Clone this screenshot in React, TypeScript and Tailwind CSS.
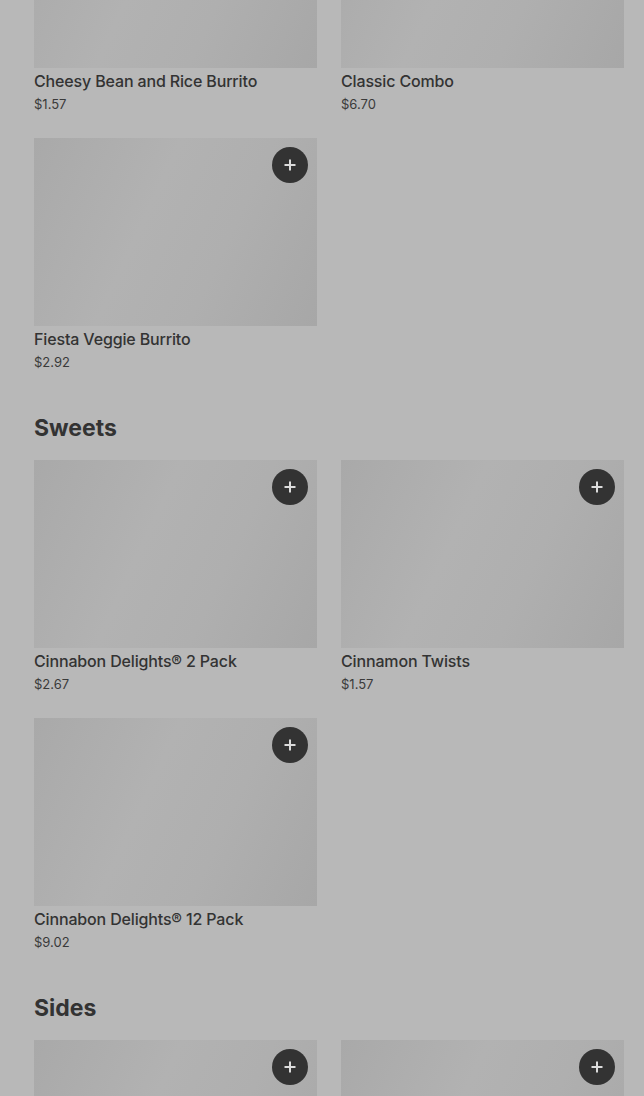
import React from "react";

type Item = { name?: string; price?: string };

const font = { fontFamily: "Inter, 'Liberation Sans', sans-serif" };

function PlusButton() {
  return (
    <button className="absolute top-[9px] right-[9px] w-9 h-9 rounded-full bg-[#333333] flex items-center justify-center">
      <svg width="14" height="14" viewBox="0 0 14 14">
        <path d="M7 1.5v11M1.5 7h11" stroke="#dcdcdc" strokeWidth="2" />
      </svg>
    </button>
  );
}

function Card({ item }: { item: Item }) {
  return (
    <div className="flex flex-col">
      <div className="relative h-[188px] bg-[linear-gradient(115deg,#a9a9a9_0%,#b2b2b2_40%,#afafaf_65%,#a7a7a7_100%)]">
        <PlusButton />
      </div>
      {item.name && (
        <div className="mt-[3px] text-[16px] leading-[20px] font-medium tracking-[-0.15px] text-[#333333]">{item.name}</div>
      )}
      {item.price && <div className="mt-[4px] text-[13px] leading-[18px] text-[#3a3a3a]">{item.price}</div>}
    </div>
  );
}

function Grid({ items }: { items: Item[] }) {
  return (
    <div className="grid grid-cols-2 gap-x-6 gap-y-[25px]">
      {items.map((it, i) => (
        <Card key={i} item={it} />
      ))}
    </div>
  );
}

function Section({ title, items }: { title: string; items: Item[] }) {
  return (
    <div className="mt-10">
      <h2 className="text-[23px] leading-[32px] font-bold text-[#333333] mb-[17px] translate-y-[1px]">{title}</h2>
      <Grid items={items} />
    </div>
  );
}

export default function App() {
  return (
    <div className="w-[644px] h-[1096px] overflow-hidden bg-[#b8b8b8]" style={font}>
      <div className="pl-[34px] pr-[20px] -mt-[120px]">
        <Grid
          items={[
            { name: "Cheesy Bean and Rice Burrito", price: "$1.57" },
            { name: "Classic Combo", price: "$6.70" },
            { name: "Fiesta Veggie Burrito", price: "$2.92" },
          ]}
        />
        <Section
          title="Sweets"
          items={[
            { name: "Cinnabon Delights® 2 Pack", price: "$2.67" },
            { name: "Cinnamon Twists", price: "$1.57" },
            { name: "Cinnabon Delights® 12 Pack", price: "$9.02" },
          ]}
        />
        <Section title="Sides" items={[{}, {}]} />
      </div>
    </div>
  );
}
